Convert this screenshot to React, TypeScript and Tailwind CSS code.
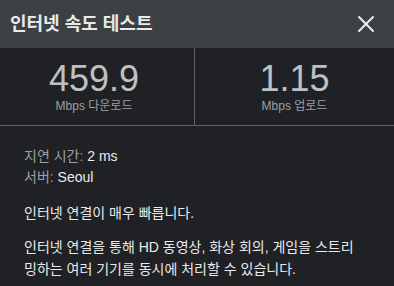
import { X } from "lucide-react";

const font = {
  fontFamily: '"Liberation Sans", Arial, "Noto Sans CJK KR", sans-serif',
};

const Stat = ({ value, label }: { value: string; label: string }) => (
  <div className="flex flex-col items-center justify-center">
    <div className="text-[36px] leading-[36px] text-[#bdc1c6]">{value}</div>
    <div className="text-[12px] leading-[14px] text-[#9aa0a6] mt-[2px]">
      {label}
    </div>
  </div>
);

export default function App() {
  return (
    <div
      className="w-[394px] h-[286px] bg-[#202124] text-[#e8eaed] overflow-hidden"
      style={font}
    >
      <div className="h-[48px] bg-[#3c4043] flex items-center justify-between pl-[10px] pr-[14px]">
        <h1 className="text-[18px] font-bold text-[#e8eaed]">
          인터넷 속도 테스트
        </h1>
        <X size={28} strokeWidth={1.8} className="text-[#e8eaed]" />
      </div>
      <div className="grid grid-cols-[195px_1fr] h-[78px] border-b border-[#5f6368]">
        <div className="border-r border-[#5f6368] flex justify-center pr-[6px]">
          <Stat value="459.9" label="Mbps 다운로드" />
        </div>
        <Stat value="1.15" label="Mbps 업로드" />
      </div>
      <div className="pl-[24px] pr-[36px] pt-[20px] text-[14px]">
        <div className="leading-[21px]">
          <span className="text-[#9aa0a6]">지연 시간: </span>2 ms
        </div>
        <div className="leading-[21px]">
          <span className="text-[#9aa0a6]">서버: </span>Seoul
        </div>
        <p className="mt-[14px] leading-[22px]">인터넷 연결이 매우 빠릅니다.</p>
        <p className="mt-[12px] leading-[22px] break-all">
          인터넷 연결을 통해 HD 동영상, 화상 회의, 게임을 스트리밍하는 여러
          기기를 동시에 처리할 수 있습니다.
        </p>
      </div>
    </div>
  );
}
